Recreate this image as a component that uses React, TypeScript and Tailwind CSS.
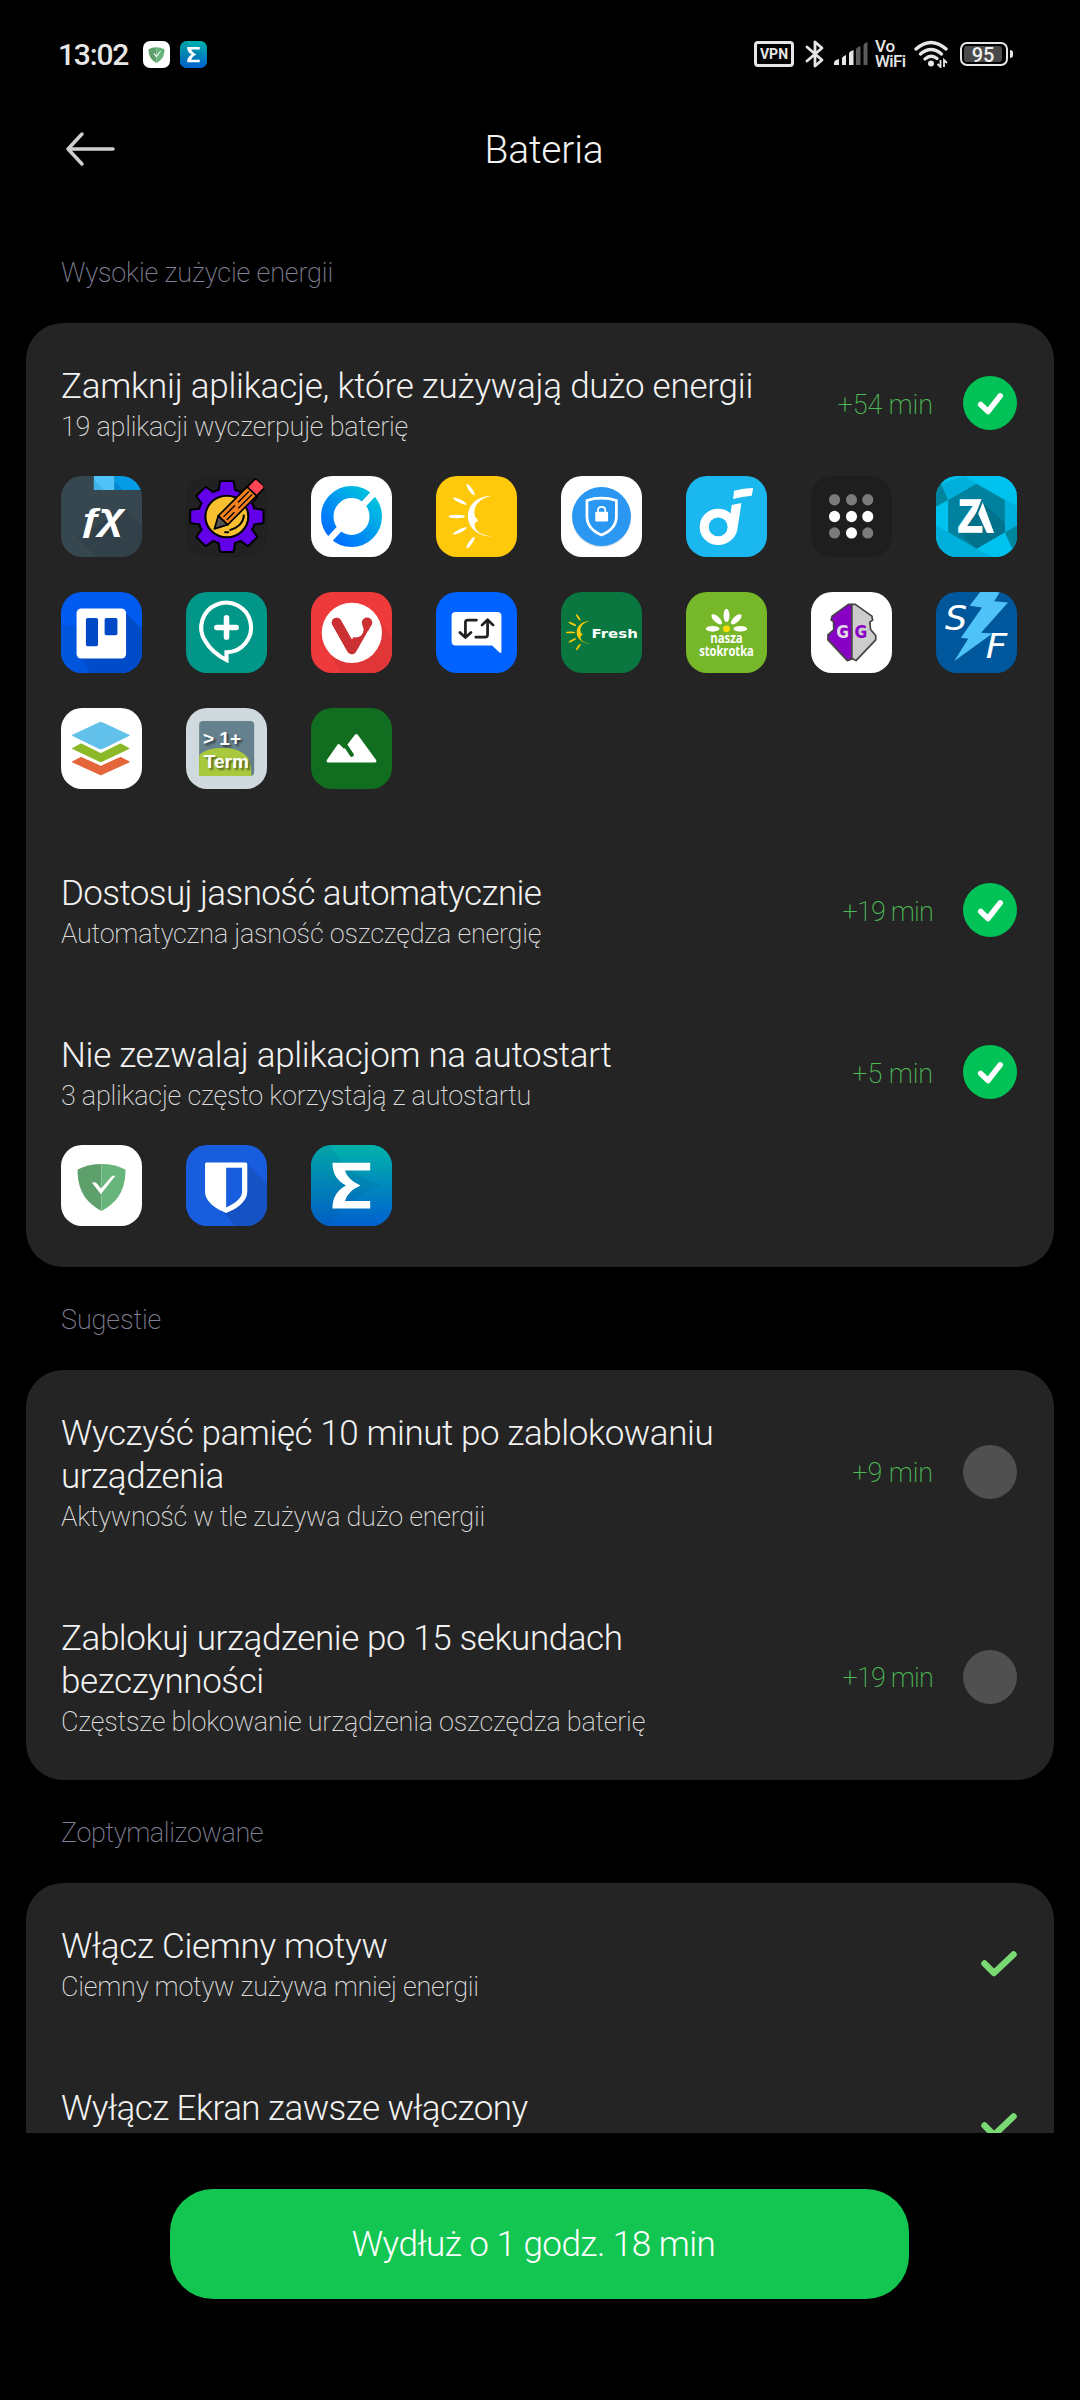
import React from 'react';

// Every launcher icon is drawn on the same 234x242 grid
const AppIcon = ({ bg, children, className = "w-[81px] h-[81px] rounded-[21px]" }: { bg: string; children?: React.ReactNode; className?: string }) => (
  <svg viewBox="0 0 234 242" preserveAspectRatio="none" className={`block shrink-0 overflow-hidden ${className}`}>
    <rect width="234" height="242" fill={bg} />
    {children}
  </svg>
);

const SunMoon = ({ color }: { color: string }) => (
  <g fill={color}>
    <path d="M160 60C72 60 66 176 162 182C118 174 108 156 113 140L122 134L113 122C104 96 122 68 160 60Z" />
    <ellipse cx="100" cy="41" rx="20" ry="5" transform="rotate(56 100 41)" />
    <ellipse cx="69" cy="75" rx="22" ry="5" transform="rotate(27 69 75)" />
    <ellipse cx="60" cy="121" rx="24" ry="5" />
    <ellipse cx="69" cy="164" rx="22" ry="5" transform="rotate(-27 69 164)" />
    <ellipse cx="100" cy="199" rx="20" ry="5" transform="rotate(-56 100 199)" />
  </g>
);

const FxIcon = () => (
  <AppIcon bg="#37474f">
    <path d="M48 182L100 242H234V150L186 97Z" fill="#324149" />
    <path d="M95 0H155V42H95Z" fill="#4fc3f7" />
    <path d="M95 11L124 42H95Z" fill="#3fb2ea" />
    <path d="M155 0H234V42H155Z" fill="#039be5" />
    <path d="M155 17L179 42H155Z" fill="#0288d1" />
    <g fontStyle="italic" fontWeight="700" fontFamily="Liberation Sans, sans-serif" fill="#fff">
      <text x="50" y="163" fontSize="91" textLength="68" lengthAdjust="spacingAndGlyphs">ƒ</text>
      <text x="110" y="158" fontSize="112" textLength="74" lengthAdjust="spacingAndGlyphs">χ</text>
    </g>
  </AppIcon>
);

const teeth = [0, 45, 90, 135, 180, 225, 270, 315];

const GearIcon = () => (
  <AppIcon bg="#212121">
    <g stroke="#000" strokeWidth="12" strokeLinejoin="round" fill="#000">
      <circle cx="118" cy="121" r="80" />
      {teeth.map(a => <path key={a} d="M101 18H135L140 50H96Z" transform={`rotate(${a} 118 121)`} />)}
    </g>
    <g fill="#6200ea">
      <circle cx="118" cy="121" r="80" />
      {teeth.map(a => <path key={a} d="M101 18H135L140 50H96Z" transform={`rotate(${a} 118 121)`} />)}
    </g>
    <circle cx="118" cy="121" r="62" fill="#f8c030" stroke="#000" strokeWidth="6" />
    <path d="M167 118C166 140 148 156 128 161M113 168H122" fill="none" stroke="#000" strokeWidth="6" strokeLinecap="round" />
    <g transform="translate(82 158) rotate(-46)" stroke="#000" strokeWidth="5" strokeLinejoin="round">
      <path d="M0 0L36 -19V19Z" fill="#555" />
      <path d="M36 -19H156V19H36Z" fill="#f5821f" />
      <path d="M156 -19H184Q192 -19 192 -11V11Q192 19 184 19H156Z" fill="#ff4655" />
      <path d="M44 -6H92M104 -6H150M44 7H76M92 7H150" strokeWidth="4" />
    </g>
  </AppIcon>
);

const RingIcon = () => (
  <AppIcon bg="#fff">
    <defs>
      <linearGradient id="ring" x1="0" y1="1" x2="1" y2="0">
        <stop offset="0.1" stopColor="#0070ff" />
        <stop offset="0.9" stopColor="#00bfe0" />
      </linearGradient>
    </defs>
    <ellipse cx="117" cy="121" rx="70" ry="73" fill="none" stroke="url(#ring)" strokeWidth="36" />
    <path d="M190 42L152 84M82 158L42 202" stroke="#fff" strokeWidth="19" />
  </AppIcon>
);

const LockShieldIcon = () => (
  <AppIcon bg="#fff">
    <ellipse cx="117" cy="124" rx="86" ry="89" fill="#d5dde5" />
    <ellipse cx="117" cy="121" rx="85" ry="88" fill="#2a97f2" />
    <path d="M117 66Q140 66 160 73V120C160 148 143 165 117 176C91 165 75 148 75 120V73Q94 66 117 66Z" fill="none" stroke="#fff" strokeWidth="8" />
    <rect x="99" y="107" width="37" height="29" rx="4" fill="#fff" />
    <path d="M107 109V101Q107 92 117 92Q128 92 128 101V109" fill="none" stroke="#fff" strokeWidth="5" />
  </AppIcon>
);

const NoteIcon = () => (
  <AppIcon bg="#1ab8ef">
    <ellipse cx="93" cy="152" rx="40" ry="41" fill="none" stroke="#fff" strokeWidth="27" />
    <path d="M132 87L160 81L149 156Q146 182 124 196L118 120L128 118Z" fill="#fff" />
    <ellipse cx="93" cy="152" rx="27" ry="28" fill="#1ab8ef" />
    <path d="M139 44Q166 36 194 36L190 59Q162 61 136 69Z" fill="#fff" />
  </AppIcon>
);

const dots = [
  [68, 71, "#7b7b7b"], [117, 71, "#7b7b7b"], [164, 71, "#7b7b7b"],
  [68, 121, "#fff"], [117, 121, "#fff"], [164, 121, "#fff"],
  [68, 170, "#7b7b7b"], [117, 170, "#fff"], [164, 170, "#7b7b7b"],
];

const DotsIcon = () => (
  <AppIcon bg="#1e1e1e">
    {dots.map(([x, y, c]) => <ellipse key={`${x}-${y}`} cx={x} cy={y} rx="16" ry="17" fill={c as string} />)}
  </AppIcon>
);

const ArchiverIcon = () => (
  <AppIcon bg="#00c2ef">
    <path d="M14 24L80 0L117 23L35 72ZM0 148L35 168L117 217L165 242H0ZM85 0L199 72L234 50V0Z" fill="#00b0da" />
    <path d="M85 0L199 72L234 50V0Z" fill="#00c2ef" />
    <path d="M199 72V168L234 148V90Z" fill="#00b0da" />
    <path d="M12 18L35 72L0 92V40ZM199 168L234 148V200L222 222Z" fill="#00859f" />
    <path d="M117 23L199 72V168L117 217L35 168V72Z" fill="#00829e" />
    <path d="M133 76L199 140V168L117 217L68 170Z" fill="#00728b" />
    <text x="63" y="168" fontSize="136" fontWeight="700" fontFamily="Liberation Sans, sans-serif" fill="#fff" stroke="#fff" strokeWidth="5" textLength="72" lengthAdjust="spacingAndGlyphs">Z</text>
    <path d="M134 76L168 170H147L119 106Z" fill="#fff" />
    <path d="M134 72L112 130" stroke="#00728b" strokeWidth="6" />
  </AppIcon>
);

const BoardIcon = () => (
  <AppIcon bg="#005cf0">
    <path d="M0 100H234V242H0Z" fill="#0055dd" />
    <path d="M188 62L234 112V242H86L56 196Z" fill="#004bc8" />
    <rect x="45" y="49" width="143" height="150" rx="14" fill="#fff" />
    <rect x="72" y="78" width="35" height="84" rx="5" fill="#0049c6" />
    <rect x="126" y="78" width="37" height="51" rx="5" fill="#0049c6" />
  </AppIcon>
);

const PlusPinIcon = () => (
  <AppIcon bg="#009788">
    <path d="M117 203V180A72 74 0 1 0 56 147Q76 182 117 203Z" fill="none" stroke="#fff" strokeWidth="12" />
    <path d="M117 77V135M89 106H145" stroke="#fff" strokeWidth="16" strokeLinecap="round" />
  </AppIcon>
);

const VivaldiIcon = () => (
  <AppIcon bg="#ef3a3b">
    <path d="M200 90L234 140V242H85L60 190Z" fill="#e03637" />
    <ellipse cx="118" cy="122" rx="87" ry="90" fill="#fff" />
    <path d="M74 91L118 172L151 112" fill="none" stroke="#cb3132" strokeWidth="28" strokeLinecap="round" strokeLinejoin="round" />
    <path d="M151 92Q150 105 152 112L165 117L175 97Z" fill="#cb3132" />
    <ellipse cx="162" cy="91" rx="15" ry="15" fill="#cb3132" />
    <ellipse cx="129" cy="112" rx="23" ry="24" fill="#fff" />
    <path d="M74 91L116 168" stroke="#cb3132" strokeWidth="28" strokeLinecap="round" />
  </AppIcon>
);

const SwapChatIcon = () => (
  <AppIcon bg="#0062ff">
    <path d="M57 60H177Q189 60 189 72V177Q189 186 182 179L162 160H57Q45 160 45 148V72Q45 60 57 60Z" fill="#fff" />
    <g fill="none" stroke="#212121" strokeWidth="8" strokeLinecap="round" strokeLinejoin="round">
      <path d="M117 84H92Q85 84 85 91V135M69 121L85 136L101 121" />
      <path d="M115 135H142Q149 135 149 128V84M133 99L149 83L165 99" />
    </g>
  </AppIcon>
);

const FreshIcon = () => (
  <AppIcon bg="#09773f">
    <g transform="translate(-6 53) scale(.56)"><SunMoon color="#ffcb05" /></g>
    <text x="88" y="136" fontSize="39" fontWeight="700" fontFamily="DejaVu Sans, sans-serif" fill="#fff" textLength="134" lengthAdjust="spacingAndGlyphs">Fresh</text>
  </AppIcon>
);

const DaisyIcon = () => (
  <AppIcon bg="#77b72a">
    {[180, 225, 270, 315, 0].map(a => <ellipse key={a} cx="157" cy="110" rx="20" ry="8.5" fill="#fff" transform={`rotate(${a} 117 110)`} />)}
    <circle cx="117" cy="110" r="10" fill="#ffdd00" />
    <text x="70" y="153" fontSize="40" fontWeight="700" fontFamily="Open Sans, sans-serif" fill="#fff" textLength="94" lengthAdjust="spacingAndGlyphs">nasza</text>
    <text x="38" y="192" fontSize="40" fontWeight="700" fontFamily="Open Sans, sans-serif" fill="#fff" textLength="158" lengthAdjust="spacingAndGlyphs">stokrotka</text>
  </AppIcon>
);

const GuardianIcon = () => (
  <AppIcon bg="#fff">
    <g stroke="#454545" strokeWidth="5" strokeLinejoin="round">
      <path d="M108 37H118V200L105 205L49 143V128L66 112L65 88L58 84L61 72Z" fill="#8700c3" />
      <path d="M118 64V37H128L176 72L178 84L170 90L172 112L187 130V143L130 205L118 198Z" fill="#ccc" />
    </g>
    <g fontSize="52" fontWeight="700" fontFamily="DejaVu Sans, sans-serif">
      <text x="73" y="138" fill="#e2d8e8" textLength="37" lengthAdjust="spacingAndGlyphs">G</text>
      <text x="126" y="138" fill="#8a00c8" textLength="37" lengthAdjust="spacingAndGlyphs">G</text>
    </g>
  </AppIcon>
);

const BoltIcon = () => (
  <AppIcon bg="#00579b">
    <path d="M128 0H185L168 28L208 31L130 122L163 124L53 206L93 140L72 137L133 46L97 41Z" fill="#4fc3f7" />
    <g fontSize="98" fontStyle="italic" fontFamily="DejaVu Sans, sans-serif" fill="#fff">
      <text x="26" y="115" textLength="64" lengthAdjust="spacingAndGlyphs">S</text>
      <text x="144" y="197" textLength="62" lengthAdjust="spacingAndGlyphs">F</text>
    </g>
  </AppIcon>
);

const LayersIcon = () => (
  <AppIcon bg="#fff">
    <g strokeWidth="4" strokeLinejoin="round">
      <path d="M34 161L58 148L115 175L172 148L196 161L115 199Z" fill="#e4663a" stroke="#e4663a" />
      <path d="M34 121L58 108L115 137L172 108L196 121L115 160Z" fill="#8bb928" stroke="#8bb928" />
      <path d="M34 82L108 46Q115 42 122 46L196 82L122 119Q115 123 108 119Z" fill="#62c1ea" stroke="#62c1ea" />
    </g>
  </AppIcon>
);

const TermIcon = () => (
  <AppIcon bg="#d0d9de">
    <rect x="38" y="39" width="159" height="164" rx="12" fill="#66818e" />
    <path d="M38 142C60 112 150 108 178 148Q190 165 189 203H38Z" fill="#a8c93e" />
    <g fontSize="55" fontWeight="700" fontFamily="Liberation Sans, sans-serif" fill="#fff" className="[text-shadow:2px_2px_2px_#00000080]">
      <text x="49" y="112" textLength="110">&gt; 1+</text>
      <text x="51" y="179" textLength="131">Term</text>
    </g>
  </AppIcon>
);

const MountainsIcon = () => (
  <AppIcon bg="#116d1f">
    <path d="M50 158L80 113L96 130L131 83L184 158Z" fill="#fff" stroke="#fff" strokeWidth="10" strokeLinejoin="round" />
    <path d="M92 100L118 140" stroke="#116d1f" strokeWidth="12" strokeLinecap="round" />
  </AppIcon>
);

const AdguardIcon = ({ className }: { className?: string }) => (
  <AppIcon bg="#fff" className={className}>
    <path d="M117 57Q82 57 48 73V85C50 140 76 175 117 197Z" fill="#5ea06b" />
    <path d="M117 57Q152 57 186 73V85C184 140 158 175 117 197Z" fill="#68b57b" />
    <path d="M89 112H101L116 130L148 92L157 92L115 147Z" fill="#fff" />
  </AppIcon>
);

const BitwardenIcon = () => (
  <AppIcon bg="#175ddd">
    <path d="M176 56L234 116V242H140L100 190Z" fill="#1553c5" />
    <path d="M59 52H172Q177 52 177 57V140C177 170 145 192 116 203C87 192 55 170 55 140V57Q55 52 59 52Z" fill="#fff" />
    <path d="M116 68H162V140C162 158 143 174 116 187Z" fill="#175ddd" />
  </AppIcon>
);

const ZeppIcon = ({ className }: { className?: string }) => (
  <AppIcon bg="#0083bb" className={className}>
    <defs>
      <linearGradient id="zepp" x1="0" y1="0" x2="0" y2="1">
        <stop offset="0" stopColor="#00b3aa" />
        <stop offset="1" stopColor="#0060cf" />
      </linearGradient>
    </defs>
    <rect width="234" height="242" fill="url(#zepp)" />
    <path d="M0 0H58Q78 48 115 76Q155 102 205 121Q150 142 115 168Q78 196 58 242H0Z" fill="#00558c" opacity=".14" />
    <path d="M62 53H171V76H98Q106 104 143 121Q106 138 98 167H171V190H62C62 158 74 136 101 121C74 106 62 84 62 53Z" fill="#fff" />
  </AppIcon>
);

const highUsageApps = [
  FxIcon, GearIcon, RingIcon,
  () => <AppIcon bg="#fec90b"><SunMoon color="#fff" /></AppIcon>,
  LockShieldIcon, NoteIcon, DotsIcon, ArchiverIcon,
  BoardIcon, PlusPinIcon, VivaldiIcon, SwapChatIcon, FreshIcon, DaisyIcon, GuardianIcon, BoltIcon,
  LayersIcon, TermIcon, MountainsIcon,
];

const autostartApps = [AdguardIcon, BitwardenIcon, ZeppIcon];

type Mark = "on" | "off" | "done";

const Marker = ({ mark }: { mark: Mark }) => {
  if (mark === "done") {
    return (
      <svg width="36" height="26" viewBox="0 0 36 26" className="shrink-0">
        <path d="M3.5 12.5L13 22L32.5 3.5" fill="none" stroke="#79da74" strokeWidth="6.5" strokeLinecap="round" strokeLinejoin="round" />
      </svg>
    );
  }
  if (mark === "off") {
    return <div className="mb-[2px] w-[54px] h-[54px] shrink-0 rounded-full bg-[#505050]" />;
  }
  return (
    <div className="mb-[2px] w-[54px] h-[54px] shrink-0 rounded-full bg-[#00c256]">
      <svg width="54" height="54" viewBox="0 0 54 54">
        <path d="M17.7 28.5L25 35.5L37.3 19.8" fill="none" stroke="#fff" strokeWidth="5.5" strokeLinecap="round" strokeLinejoin="round" />
      </svg>
    </div>
  );
};

interface ItemProps {
  title: string;
  sub?: string;
  mark: Mark;
  gain?: string;
  apps?: React.ComponentType[];
  titleClass?: string;
  gainClass?: string;
}

const Item = ({ title, sub, mark, gain, apps, titleClass = "tracking-[-0.3px]", gainClass = "tracking-[-0.1px]" }: ItemProps) => (
  <div className={apps ? "pt-[42px] pb-[41px]" : "py-[42px]"}>
    <div className="flex items-center justify-between">
      <div className="w-[705px]">
        <p className={`text-[35px] leading-[43px] font-light text-[#f2f2f2] ${titleClass}`}>{title}</p>
        <p className="h-[35px] pt-[3px] text-[27px] leading-[33px] font-extralight tracking-[-0.25px] text-[#dcdcdc]">{sub}</p>
      </div>
      <div className="flex items-center">
        {gain && <span className={`mr-[30px] pt-px text-[27px] leading-9 font-extralight text-[#4dbb55] ${gainClass}`}>{gain}</span>}
        <Marker mark={mark} />
      </div>
    </div>
    {apps && (
      <div className="mt-[33px] grid grid-cols-[repeat(8,81px)] gap-x-[44px] gap-y-[35px]">
        {apps.map((Icon, index) => <Icon key={index} />)}
      </div>
    )}
  </div>
);

const Section = ({ label, labelClass, children }: { label: string; labelClass: string; children: React.ReactNode }) => (
  <section>
    <h2 className={`h-[103px] pt-[35px] pl-[35px] text-[27px] leading-9 font-extralight text-[#808094] ${labelClass}`}>{label}</h2>
    <div className="rounded-[37px] bg-[#242424] pl-[35px] pr-[37px]">{children}</div>
  </section>
);

const StatusBar = () => (
  <div className="flex h-[108px] shrink-0 items-center justify-between pl-[58px] pr-[67px] text-[#e6e6e6]">
    <div className="flex items-center">
      <span className="w-[85px] pt-[2px] text-[30px] leading-none font-medium tracking-[-1.2px]">13:02</span>
      <AdguardIcon className="w-[27px] h-[27px] rounded-[7px]" />
      <ZeppIcon className="ml-[10px] w-[27px] h-[27px] rounded-[7px]" />
    </div>
    <div className="flex items-center">
      <div className="flex h-[26px] w-[40px] items-center justify-center rounded-[4px] border-3 border-[#e6e6e6] text-[14px] leading-none font-bold">VPN</div>
      <svg width="20" height="30" viewBox="0 0 20 30" className="ml-[11px]">
        <path d="M2 8L17 21L10 27V3L17 9L2 22" fill="none" stroke="#e6e6e6" strokeWidth="2.8" strokeLinecap="round" strokeLinejoin="round" />
      </svg>
      <svg width="34" height="24" viewBox="0 0 34 24" className="ml-[9px]">
        <g fill="#e6e6e6">
          <path d="M0 21Q0 18 5 17V23H0ZM8 16Q9 14 12 13V23H8ZM15 11Q16 9 19.5 8V23H15Z" />
          <path d="M22 7Q23 5 26.5 4V23H22ZM29.5 3Q30 1 33.5 0V23H29.5Z" fill="#5c5c5c" />
        </g>
      </svg>
      <div className="ml-[7px] w-[32px] text-[17px] leading-[15px] font-medium">
        <p>Vo</p>
        <p className="tracking-[-0.6px]">WiFi</p>
      </div>
      <svg width="36" height="28" viewBox="0 0 36 28" className="ml-[7px]">
        <g fill="none" stroke="#e6e6e6" strokeWidth="3.4" strokeLinecap="round">
          <path d="M2 9Q17 -4 32 9" />
          <path d="M6.5 14Q17 5 27.5 14" />
          <path d="M11 19Q17 14 23 18.5" />
        </g>
        <circle cx="17" cy="23.5" r="3" fill="#e6e6e6" />
        <path d="M26.5 20V27L23.5 24M30 27V20L33 23" fill="none" stroke="#e6e6e6" strokeWidth="1.8" />
      </svg>
      <div className="ml-[10px] flex h-[24px] w-[48px] rounded-[7px] border-2 border-[#e6e6e6] p-[2px]">
        <div className="flex w-[38px] items-center justify-center rounded-[3px] bg-[#4a4a4a] pt-px text-[20px] leading-none font-medium text-[#f0f0f0]">95</div>
      </div>
      <div className="ml-[2px] h-[8px] w-[3px] rounded-r-full bg-[#e6e6e6]" />
    </div>
  </div>
);

export default function App() {
  return (
    <div className="flex h-[2400px] w-[1080px] flex-col overflow-hidden bg-black font-[Roboto,sans-serif]">
      <StatusBar />

      <header className="grid h-[82px] shrink-0 grid-cols-[120px_1fr_120px] items-center">
        <svg width="50" height="36" viewBox="0 0 50 36" className="ml-[65px]">
          <path d="M48 18H3M17 3L3 18L17 33" fill="none" stroke="#cfcfcf" strokeWidth="3.5" strokeLinecap="round" strokeLinejoin="round" />
        </svg>
        <h1 className="pl-[8px] pt-[2px] text-center text-[39px] leading-none font-light tracking-[-0.2px] text-[#f2f2f2]">Bateria</h1>
      </header>

      {/* scrolling list, cut off above the bottom bar */}
      <main className="h-[1943px] shrink-0 overflow-hidden pt-[30px] pl-[26px] pr-[26px]">
        <Section label="Wysokie zużycie energii" labelClass="tracking-[-0.15px]">
          <Item title="Zamknij aplikacje, które zużywają dużo energii" titleClass="tracking-[-0.23px]" sub="19 aplikacji wyczerpuje baterię" gain="+54 min" mark="on" apps={highUsageApps} />
          <Item title="Dostosuj jasność automatycznie" titleClass="tracking-[-0.6px]" sub="Automatyczna jasność oszczędza energię" gain="+19 min" gainClass="tracking-[-0.8px]" mark="on" />
          <Item title="Nie zezwalaj aplikacjom na autostart" sub="3 aplikacje często korzystają z autostartu" gain="+5 min" mark="on" apps={autostartApps} />
        </Section>

        <Section label="Sugestie" labelClass="tracking-[-0.1px]">
          <Item title="Wyczyść pamięć 10 minut po zablokowaniu urządzenia" titleClass="tracking-[-0.42px]" sub="Aktywność w tle zużywa dużo energii" gain="+9 min" mark="off" />
          <Item title="Zablokuj urządzenie po 15 sekundach bezczynności" titleClass="tracking-[-0.42px]" sub="Częstsze blokowanie urządzenia oszczędza baterię" gain="+19 min" gainClass="tracking-[-0.8px]" mark="off" />
        </Section>

        <Section label="Zoptymalizowane" labelClass="tracking-[-0.4px]">
          <Item title="Włącz Ciemny motyw" sub="Ciemny motyw zużywa mniej energii" mark="done" />
          <Item title="Wyłącz Ekran zawsze włączony" titleClass="tracking-[-0.55px]" mark="done" />
        </Section>
      </main>

      <footer className="pt-[56px] pl-[170px]">
        <button className="h-[110px] w-[739px] rounded-[43px] bg-[#13c652] pt-[2px] pr-[12px] text-[35px] font-light tracking-[-0.5px] text-white">Wydłuż o 1 godz. 18 min</button>
      </footer>
    </div>
  );
}
